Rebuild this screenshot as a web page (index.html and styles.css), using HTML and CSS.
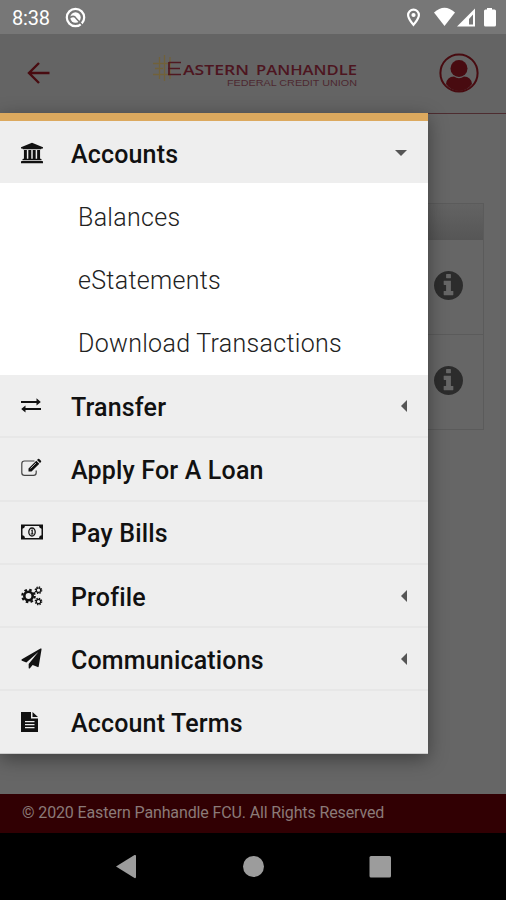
FILE: index.html
```html
<!DOCTYPE html>
<html lang="en">
<head>
<meta charset="utf-8">
<title>Eastern Panhandle Federal Credit Union</title>
<link rel="stylesheet" href="styles.css">
</head>
<body>
<div class="screen">
  <div class="status">
    <span class="time">8:38</span>
    <svg class="status-app" width="21" height="21" viewBox="0 0 21 21"><circle cx="10.5" cy="10.5" r="8.7" fill="none" stroke="#fff" stroke-width="2.2"/><circle cx="10.5" cy="10.5" r="5.2" fill="#fff"/><path d="M5 10.500q4-2.500 6 .7l7 7.500" fill="none" stroke="#777" stroke-width="1.500"/></svg>
    <svg class="status-icons" width="92" height="22" viewBox="405 6 92 22"><path fill="#fff" fill-rule="evenodd" d="M413.500 8.500a6.500 6.500 0 0 0-6.500 6.500c0 4.700 6.500 11.500 6.500 11.500S420 19.700 420 15a6.500 6.500 0 0 0-6.500-6.500Zm0 2.200a4.300 4.300 0 0 1 4.300 4.300c0 2.400-2.700 6-4.300 8-1.600-2-4.300-5.600-4.300-8a4.300 4.300 0 0 1 4.300-4.300Z"/><circle cx="413.500" cy="15" r="2.100" fill="#fff"/><path fill="#fff" d="M434 12.500q10.500-9.500 21 0L444.500 26Z"/><path fill="#fff" fill-rule="evenodd" d="M475 8.500v18h-18Zm-2 6-4 4.500v5.500h4Z"/><path fill="#fff" d="M487 9.500V8h5v1.500h2.500a1.500 1.500 0 0 1 1.500 1.500v14a1.500 1.500 0 0 1-1.500 1.500h-9a1.500 1.500 0 0 1-1.500-1.500V11a1.500 1.500 0 0 1 1.500-1.500Z"/></svg>
  </div>
  <header class="header">
    <svg class="back" width="24" height="24" viewBox="0 0 24 24"><path d="M22.500 12H2.500M12 2 2 12l10 10" fill="none" stroke="#480b10" stroke-width="2.400"/></svg>
    <svg class="logo" width="208" height="36" viewBox="151 54 208 36">
      <path d="M159.500 58v22M164.500 56v26M170 58v22M153 64.500h18M155 69.500h8M153 75.500h18" fill="none" stroke="#71613a" stroke-width="1.300"/>
      <path d="M169 63.500h12M168 69.500h12M168 75.500h13M169 63v12.500" fill="none" stroke="#501820" stroke-width="1.700"/>
      <g class="brand"><text x="183" y="75.500" textLength="66" lengthAdjust="spacingAndGlyphs">ASTERN</text><text x="256" y="75.500" textLength="101" lengthAdjust="spacingAndGlyphs">PANHANDLE</text></g>
      <text class="brand-sub" x="227" y="86.500" textLength="130" lengthAdjust="spacingAndGlyphs">FEDERAL CREDIT UNION</text>
    </svg>
    <svg class="user" width="40" height="40" viewBox="0 0 40 40"><circle cx="20" cy="20" r="18.600" fill="none" stroke="#480b10" stroke-width="2"/><circle cx="20" cy="15.500" r="8.500" fill="#480b10"/><path d="M7 31q1-7.500 8-7.500 5 3.500 10 0 7 0 8 7.500-5 7-13 7T7 31Z" fill="#480b10"/></svg>
  </header>
  <main class="content">
    <div class="table">
      <div class="table-head"></div>
      <div class="table-row"><svg class="info" viewBox="128 128 1536 1536"><use href="#info"/></svg></div>
      <div class="table-row"><svg class="info" viewBox="128 128 1536 1536"><use href="#info"/></svg></div>
    </div>
  </main>
  <footer class="footer">© 2020 Eastern Panhandle FCU. All Rights Reserved</footer>
  <div class="navbar">
    <svg width="506" height="67" viewBox="0 833 506 67" fill="#9c9c9c"><path d="M116 866.500 134.500 855q1.500-.5 1.500 1v21q0 1.500-1.500 1Z"/><circle cx="253.500" cy="866.500" r="10.500"/><rect x="369.500" y="856" width="21.500" height="21.500" rx="1.500"/></svg>
  </div>

  <nav class="drawer">
    <div class="item first"><svg class="icon" viewBox="0 0 22 22"><g transform="scale(.01146) translate(0 64)"><path d="M960 0l960 384v128h-128q0 26-20.500 45t-48.500 19H197q-28 0-48.500-19T128 512H0V384ZM256 640h256v768h128V640h256v768h128V640h256v768h128V640h256v768h59q28 0 48.500 19t20.500 45v64H128v-64q0-26 20.500-45t48.500-19h59ZM1851 1600q28 0 48.500 19t20.500 45v128H0v-128q0-26 20.500-45t48.500-19Z"/></g></svg><span>Accounts</span><i class="caret down"></i></div>
    <div class="sub">Balances</div>
    <div class="sub">eStatements</div>
    <div class="sub">Download Transactions</div>
    <div class="item"><svg class="icon" viewBox="0 0 22 22"><path d="M0 6h15.500V3.200l4.300 3.700-4.300 3.700V8H0ZM20 13H4.500v-2.600L.2 14l4.300 3.600V15H20Z"/></svg><span>Transfer</span><i class="caret"></i></div>
    <div class="item"><svg class="icon" viewBox="0 0 22 22"><path d="M13.500 3H3.500Q.8 3 .8 5.700v9Q.8 17.400 3.500 17.400h9q2.700 0 2.700-2.700V12.500" fill="none" stroke="#444" stroke-width="1.200"/><path d="m7.500 10.500 7.800-7.800 3 3-7.800 7.800h-3ZM16 2l1-1q.6-.5 1.200 0L20 2.800q.5.600 0 1.200l-1 1Z"/><path d="m9.500 10.500 5.500-5.500" stroke="#eee" stroke-width=".7"/></svg><span>Apply For A Loan</span></div>
    <div class="item"><svg class="icon" viewBox="0 0 22 22"><path fill-rule="evenodd" d="M0 3.500h22v15H0ZM4 5a3 3 0 0 1-2.500 2.700v6.600A3 3 0 0 1 4 17h14a3 3 0 0 1 2.500-2.700V7.700A3 3 0 0 1 18 5Z"/><ellipse cx="11" cy="11" rx="3.200" ry="4" fill="none" stroke="#111" stroke-width="1.300"/><path d="M9.800 9.300 11 8.500h.8v4h.8v1H9.700v-1h.9V9.700Z"/></svg><span>Pay Bills</span></div>
    <div class="item"><svg class="icon gears" viewBox="0 0 22 22"><circle cx="7.500" cy="11" r="4.200" stroke-width="2.600"/><circle cx="7.500" cy="11" r="6.200" stroke-width="2.200" stroke-dasharray="2.500 2.370"/><circle cx="17.500" cy="5.200" r="2.200" stroke-width="1.200"/><circle cx="17.500" cy="5.200" r="3.200" stroke-width="1.300" stroke-dasharray="1.400 1.110"/><circle cx="17.500" cy="16.500" r="2.200" stroke-width="1.200"/><circle cx="17.500" cy="16.500" r="3.200" stroke-width="1.300" stroke-dasharray="1.400 1.110"/></svg><span>Profile</span><i class="caret"></i></div>
    <div class="item"><svg class="icon" viewBox="0 0 22 22"><path transform="translate(.5 .5) scale(.0112)" d="M1764 11q33 24 27 64l-256 1536q-5 29-32 45-14 8-31 8-11 0-24-5l-453-185-242 295q-18 23-49 23-13 0-22-4-19-7-30.500-23.500t-11.500-36.500v-349l864-1059-1069 925-395-162q-37-14-40-55-2-40 32-59l1664-960q15-9 32-9 20 0 36 11z"/></svg><span>Communications</span><i class="caret"></i></div>
    <div class="item"><svg class="icon" viewBox="0 0 22 22"><path fill-rule="evenodd" d="M0 1h10v6.500h7V21H0ZM11.500 1l5.500 5h-5.500ZM4 10v1.200h9.500V10ZM4 13v1.200h9.500V13ZM4 16v1.200h9.500V16Z"/></svg><span>Account Terms</span></div>
  </nav>
</div>
<svg class="defs" width="0" height="0"><defs><path id="info" d="M1152 1376v-160q0-14-9-23t-23-9h-96v-512q0-14-9-23t-23-9h-320q-14 0-23 9t-9 23v160q0 14 9 23t23 9h96v320h-96q-14 0-23 9t-9 23v160q0 14 9 23t23 9h448q14 0 23-9t9-23zm-128-896v-160q0-14-9-23t-23-9h-192q-14 0-23 9t-9 23v160q0 14 9 23t23 9h192q14 0 23-9t9-23zm640 416q0 209-103 385.500t-279.500 279.500-385.500 103-385.500-103-279.500-279.500-103-385.500 103-385.500 279.500-279.500 385.500-103 385.500 103 279.500 279.500 103 385.500z"/></defs></svg>
</body>
</html>
```

FILE: styles.css
```css
* { box-sizing: border-box; }
body { margin: 0; font-family: Roboto, "Liberation Sans", sans-serif; background: #666; overflow: hidden; }
svg { display: block; flex: none; }
.defs { position: absolute; }
.screen { position: relative; width: 506px; height: 900px; display: flex; flex-direction: column; background: #666; }
.status { height: 34px; background: #777; display: flex; align-items: center; padding: 0 9px 0 12px; color: #fff; }
.time { font-size: 20px; line-height: 34px; letter-spacing: -.2px; padding-top: 2px; }
.status-app { margin-left: 15px; }
.status-icons { margin-left: auto; }
.header { height: 80px; background: #646464; border-bottom: 1px solid #4d2c30; display: flex; align-items: center; justify-content: space-between; padding: 0 27px 2px 27px; }
.logo { margin-left: 20px; margin-top: -4px; }
.brand { font: 600 13.500px "Open Sans", sans-serif; fill: #4d1520; }
.brand-sub { font: 8.800px "Liberation Sans", sans-serif; fill: #4d2830; }
.content { height: 680px; padding: 89px 22px 0; }
.table { height: 227px; border: 1px solid #5b5b5b; }
.table-head { height: 36px; background: linear-gradient(#636363, #565656); }
.table-row { height: 94px; display: flex; align-items: center; justify-content: flex-end; padding: 0 20px 4px 0; }
.table-row + .table-row { height: 95px; border-top: 1px solid #5b5b5b; }
.info { width: 29px; height: 29px; fill: #2c2c2c; }
.footer { height: 39px; background: #310003; color: #8b7a78; font-size: 16px; letter-spacing: -.13px; line-height: 37px; padding-left: 22px; white-space: nowrap; }
.navbar { height: 67px; background: #000; }
.drawer { position: absolute; left: 0; top: 113px; width: 428px; height: 641px; background: #eee; border-top: 8px solid #dca95e; border-bottom: 1px solid #ccc; box-shadow: 0 5px 18px rgba(0,0,0,.4); }
.item { height: 63.300px; display: flex; align-items: center; padding: 3px 21px 0; border-bottom: 2px solid #e7e7e7; font-size: 25px; font-weight: 500; letter-spacing: .17px; color: #111; }
.item.first { height: 62px; padding-top: 4px; border-bottom: 0; }
.item:last-child { height: 61px; border-bottom: 0; padding-top: 4px; }
.icon { width: 22px; height: 22px; margin-right: 28px; fill: #111; margin-top: -3px; }
.gears { fill: none; stroke: #111; }
.caret { width: 0; height: 0; margin-left: auto; margin-top: -3px; border: 6px solid transparent; border-left: 0; border-right-color: #555; }
.caret.down { border: 6px solid transparent; border-top-color: #555; border-bottom: 0; }
.sub { height: 64px; background: #fff; color: #222; font-size: 25px; font-weight: 300; letter-spacing: .3px; line-height: 69px; padding-left: 78px; }
.sub + .sub { height: 64px; line-height: 67px; }
.sub + .sub + .sub { line-height: 66px; }
```
